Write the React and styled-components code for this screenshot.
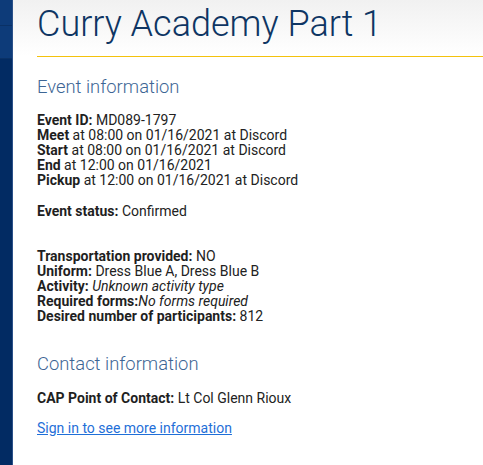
import React from 'react';
import styled, { createGlobalStyle } from 'styled-components';

const GlobalStyle = createGlobalStyle`
  html, body {
    margin: 0;
    padding: 0;
    background: #ffffff;
  }
  body {
    font-family: Roboto, "Liberation Sans", sans-serif;
    color: #222222;
  }
`;

const Page = styled.div`
  display: flex;
  min-height: 465px;
  width: 483px;
  overflow: hidden;
`;

const Sidebar = styled.nav`
  flex: 0 0 12px;
  display: flex;
  flex-direction: column;
  background: #022b63;
  border-right: 1px solid #2b5189;
`;

const NavBlock = styled.div`
  height: ${(p) => p.$h}px;
  background: #0d3b79;
  border-bottom: 1px solid #0a3166;
`;

const Main = styled.main`
  flex: 1;
  display: flex;
  flex-direction: column;
`;

const Header = styled.header`
  background: linear-gradient(#f1f1f1, #ffffff 56px);
  padding: 3px 0 0 24px;
`;

const Title = styled.h1`
  margin: 0;
  padding-bottom: 11px;
  border-bottom: 1px solid #f4c20d;
  font-size: 36px;
  font-weight: 300;
  color: #0e3563;
  line-height: 42px;
  white-space: nowrap;
`;

const Content = styled.section`
  padding: 0 0 0 24px;
  font-size: 14px;
  line-height: 15px;
`;

const SectionTitle = styled.h2`
  margin: ${(p) => p.$top}px 0 0;
  font-size: 18.4px;
  font-weight: 300;
  line-height: 21px;
  color: #3d6594;
`;

const Block = styled.div`
  margin-top: ${(p) => p.$top}px;
`;

const Line = styled.div`
  white-space: nowrap;
`;

const Label = styled.b`
  font-weight: 700;
  color: #1f1f1f;
`;

const Value = styled.span`
  color: #222222;
  font-style: ${(p) => (p.$italic ? 'italic' : 'normal')};
`;

const SignIn = styled.a`
  color: #1f6fd8;
  text-decoration: underline;
  cursor: pointer;
`;

export default function App() {
  return (
    <Page>
      <GlobalStyle />
      <Sidebar>
        <NavBlock $h={25} />
        <NavBlock $h={32} />
      </Sidebar>
      <Main>
        <Header>
          <Title>Curry Academy Part 1</Title>
        </Header>
        <Content>
          <SectionTitle $top={19}>Event information</SectionTitle>
          <Block $top={16}>
            <Line><Label>Event ID:</Label> <Value>MD089-1797</Value></Line>
            <Line><Label>Meet</Label> <Value>at 08:00 on 01/16/2021 at Discord</Value></Line>
            <Line><Label>Start</Label> <Value>at 08:00 on 01/16/2021 at Discord</Value></Line>
            <Line><Label>End</Label> <Value>at 12:00 on 01/16/2021</Value></Line>
            <Line><Label>Pickup</Label> <Value>at 12:00 on 01/16/2021 at Discord</Value></Line>
          </Block>
          <Block $top={16}>
            <Line><Label>Event status:</Label> <Value>Confirmed</Value></Line>
          </Block>
          <Block $top={30}>
            <Line><Label>Transportation provided:</Label> <Value>NO</Value></Line>
            <Line><Label>Uniform:</Label> <Value>Dress Blue A, Dress Blue B</Value></Line>
            <Line><Label>Activity:</Label> <Value $italic>Unknown activity type</Value></Line>
            <Line><Label>Required forms:</Label><Value $italic>No forms required</Value></Line>
            <Line><Label>Desired number of participants:</Label> <Value>812</Value></Line>
          </Block>
          <SectionTitle $top={29}>Contact information</SectionTitle>
          <Block $top={17}>
            <Line><Label>CAP Point of Contact:</Label> <Value>Lt Col Glenn Rioux</Value></Line>
          </Block>
          <Block $top={15}>
            <SignIn>Sign in to see more information</SignIn>
          </Block>
        </Content>
      </Main>
    </Page>
  );
}
